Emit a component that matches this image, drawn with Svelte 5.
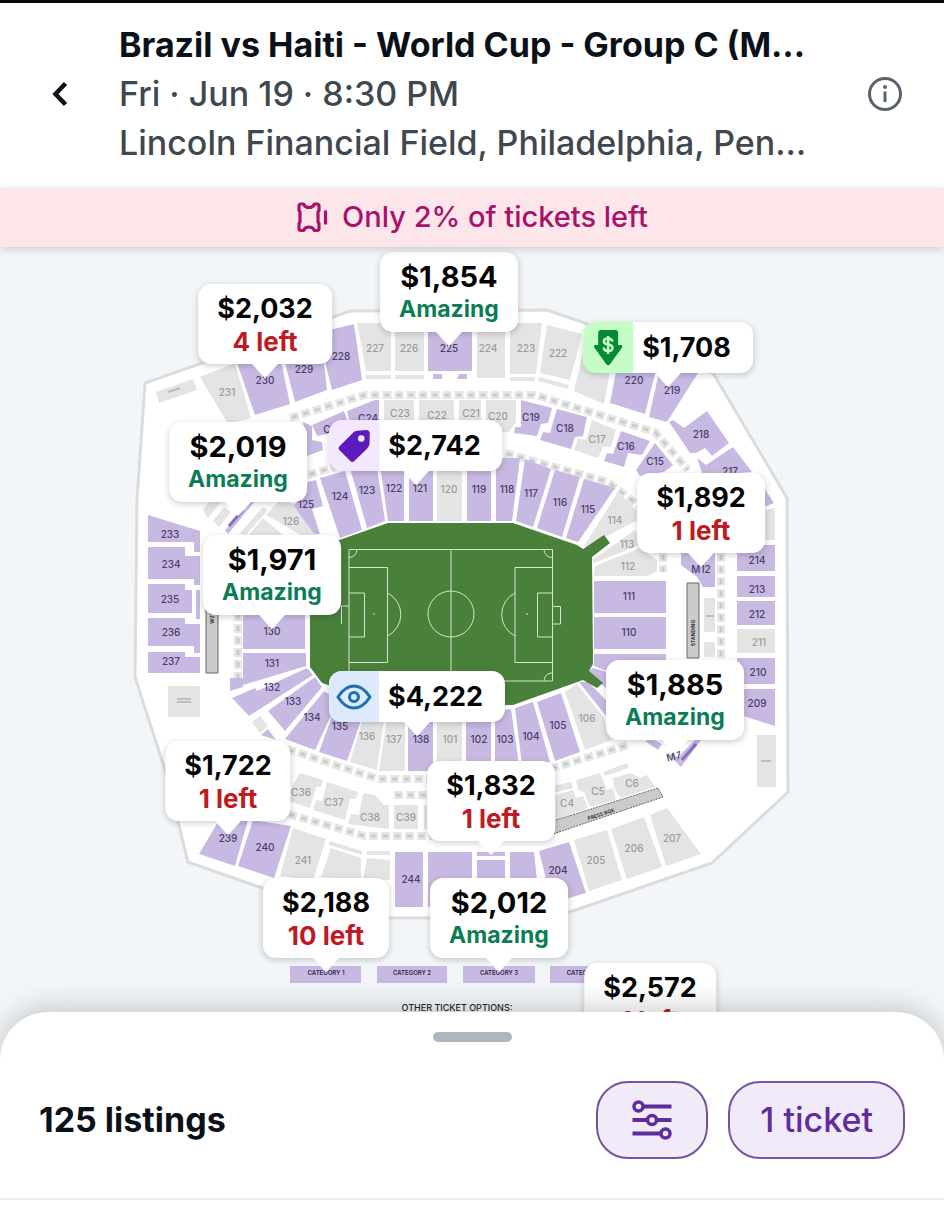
<script>
  // Seating sections: [kind, polygon, label, label x, label y]; kind p = available, g = unavailable
  const sections = [
    // Upper deck, top side
    ['g', '156,392 193,379 197,390 159,403', '', 0, 0],
    ['g', '200,377 235,363 251,418 228,424', '231', 227, 393],
    ['p', '237,363 280,356 290,404 255,415', '230', 265, 381],
    ['p', '283,355 322,345 327,390 295,402', '229', 304, 370],
    ['p', '318,333 354,324 362,380 332,390', '228', 341, 357],
    ['g', '357,323 391,323 391,371 366,371', '227', 375, 349],
    ['g', '366,375 391,375 391,379 366,379', '', 0, 0],
    ['g', '395,323 424,323 424,371 395,371', '226', 409, 349],
    ['g', '395,375 424,375 424,379 395,379', '', 0, 0],
    ['p', '428,323 472,323 472,371 428,371', '225', 449, 349],
    ['p', '433,374 442,374 442,379 433,379', '', 0, 0],
    ['p', '459,374 467,374 467,379 457,379', '', 0, 0],
    ['g', '477,323 505,323 505,378 477,378', '224', 488, 349],
    ['g', '510,323 542,323 536,374 510,374', '223', 526, 349],
    ['g', '510,377 535,377 535,381 510,381', '', 0, 0],
    ['g', '547,325 582,334 570,380 540,373', '222', 558, 354],
    ['g', '539,377 569,385 568,389 538,381', '', 0, 0],
    ['g', '586,340 614,350 604,404 574,391', '', 0, 0],
    ['p', '618,362 657,366 645,414 610,403', '220', 634, 381],
    ['p', '660,368 698,373 667,422 649,417', '219', 672, 391],
    // Upper deck, right side
    ['p', '707,411 729,443 712,456 705,448 696,453 690,453 669,422 673,420 684,428', '218', 701, 435],
    ['p', '697,458 706,465 733,447 752,472 703,476', '217', 730, 472],
    ['p', '762,485 774,503 762,508', '', 0, 0],
    ['g', '760,511 775,508 775,540 760,540', '', 0, 0],
    ['p', '737,545 775,545 775,571 737,571', '214', 757, 561],
    ['p', '737,576 775,576 775,597 737,597', '213', 757, 590],
    ['p', '737,601 775,601 775,625 737,625', '212', 757, 615],
    ['g', '737,629 775,629 775,653 737,653', '211', 759, 643],
    ['p', '737,658 775,658 775,684 737,684', '210', 758, 673],
    ['p', '737,689 775,689 775,726 737,714', '209', 757, 704],
    ['g', '757,735 776,735 776,787 757,787', '', 0, 0],
    // Upper deck, left side
    ['p', '148,515 200,531 200,552 194,552 194,542 148,542', '233', 170, 535],
    ['p', '148,547 185,547 185,556 200,556 200,585 194,585 194,579 148,579', '234', 171, 565],
    ['p', '148,584 185,584 185,590 192,590 192,613 148,613', '235', 170, 600],
    ['p', '196,590 200,590 200,619 196,619', '', 0, 0],
    ['p', '148,618 185,618 185,624 200,624 200,653 194,653 194,646 148,646', '236', 171, 633],
    ['p', '148,652 185,652 185,657 200,657 200,673 148,673', '237', 171, 662],
    ['g', '168,686 200,686 200,717 168,717', '', 0, 0],
    // Upper deck, bottom side
    ['p', '218,822 248,820 235,866 199,854', '239', 228, 839],
    ['p', '253,820 291,826 274,878 238,866', '240', 265, 848],
    ['g', '293,828 326,839 313,880 280,876', '241', 303, 861],
    ['g', '331,848 361,858 361,880 321,877', '', 0, 0],
    ['g', '330,841 362,851 362,855 329,845', '', 0, 0],
    ['g', '367,858 390,860 390,880 363,880', '', 0, 0],
    ['g', '367,851 390,851 390,855 367,855', '', 0, 0],
    ['p', '395,852 423,852 423,907 395,907', '244', 411, 880],
    ['p', '428,852 472,852 472,907 428,907', '', 0, 0],
    ['p', '477,852 505,852 505,856 477,856', '', 0, 0],
    ['p', '477,860 505,860 505,890 477,890', '', 0, 0],
    ['p', '510,852 534,852 538,890 510,890', '', 0, 0],
    ['p', '539,851 569,842 586,893 552,903', '204', 558, 871],
    ['g', '574,840 607,830 622,880 589,891', '205', 596, 861],
    ['g', '611,829 644,817 662,867 627,879', '206', 634, 849],
    ['g', '650,815 667,808 701,854 666,866', '207', 672, 839],
    // Club level, top
    ['p', '303,422 312,426 312,440 322,442 323,450 307,456', '', 0, 0],
    ['p', '312,425 344,411 348,422 330,428 328,434 317,436', 'C25', 333, 430],
    ['p', '347,411 375,400 379,400 379,424 350,424', 'C24', 368, 419],
    ['g', '384,400 414,400 414,424 384,424', 'C23', 400, 414],
    ['g', '419,400 454,400 454,424 419,424', 'C22', 437, 416],
    ['g', '459,400 481,400 481,424 459,424', 'C21', 471, 414],
    ['g', '486,400 516,400 516,422 509,432 486,432', 'C20', 498, 417],
    ['p', '521,400 552,408 548,423 541,424 537,436 514,433 515,427 521,427', 'C19', 531, 418],
    ['p', '557,409 587,417 583,436 575,437 571,449 540,440 543,432 550,433', 'C18', 565, 429],
    ['g', '592,420 616,430 611,447 603,447 598,458 574,450 578,438 586,440', 'C17', 597, 440],
    ['p', '621,431 650,441 642,455 628,453 624,467 604,461 607,453 613,454', 'C16', 626, 447],
    ['p', '655,443 673,465 664,472 640,476 636,470', 'C15', 655, 462],
    // Club level, bottom
    ['g', '300,773 323,780 321,787 316,787 310,808 285,800', 'C36', 301, 793],
    ['g', '327,782 358,792 356,799 350,799 345,820 313,810 316,800 322,801', 'C37', 334, 803],
    ['g', '363,793 375,795 384,805 389,805 389,829 348,824 351,814 359,815', 'C38', 370, 818],
    ['g', '394,805 418,805 418,829 394,829', 'C39', 406, 818],
    ['g', '424,805 436,805 436,829 424,829', '', 0, 0],
    ['g', '553,786 571,782 573,788 553,793', '', 0, 0],
    ['g', '553,796 573,790 576,798 583,796 588,808 553,821', 'C4', 567, 804],
    ['g', '576,780 600,773 607,790 613,788 616,800 590,807 584,792 578,790', 'C5', 598, 792],
    ['g', '603,772 627,763 629,768 605,776', '', 0, 0],
    ['g', '613,778 631,773 640,778 647,775 655,787 620,798 614,787', 'C6', 632, 784],
    // Lower bowl, top
    ['g', '203,510 212,498 222,500 208,518', '', 0, 0],
    ['g', '213,521 224,507 231,512 219,527', '', 0, 0],
    ['p', '225,530 250,502 256,500 228,534', '', 0, 0],
    ['g', '240,533 263,507 268,510 245,536', '', 0, 0],
    ['g', '263,518 284,536 248,536', '', 0, 0],
    ['g', '266,515 280,500 294,504 316,538 303,536', '126', 291, 522],
    ['p', '294,506 308,482 316,480 323,506 312,509 320,534 314,534', '125', 306, 505],
    ['p', '320,478 345,471 362,530 340,538', '124', 340, 497],
    ['p', '350,468 377,468 385,521 367,528', '123', 367, 491],
    ['p', '380,465 404,465 404,521 388,521', '122', 394, 489],
    ['p', '409,465 433,465 433,521 409,521', '121', 420, 489],
    ['g', '437,465 462,465 462,521 437,521', '120', 449, 490],
    ['p', '467,465 491,458 491,521 467,521', '119', 479, 490],
    ['p', '496,458 520,458 512,521 496,521', '118', 507, 490],
    ['p', '525,459 551,469 533,527 516,521', '117', 531, 494],
    ['p', '555,470 580,477 562,537 537,528', '116', 560, 503],
    ['p', '584,479 615,488 578,542 566,538', '115', 588, 510],
    ['g', '618,492 638,512 638,520 605,537 598,545 584,546', '114', 615, 521],
    ['g', '592,560 635,530 645,543 594,563', '113', 627, 545],
    ['g', '595,566 640,548 657,560 657,571 648,576 594,576', '112', 628, 567],
    // Lower bowl, ends
    ['p', '594,581 666,581 666,613 594,613', '111', 629, 597],
    ['p', '594,617 666,617 666,649 594,649', '110', 629, 633],
    ['p', '594,654 666,654 666,670 604,670 594,666', '', 0, 0],
    ['p', '593,668 608,672 608,690 588,672', '', 0, 0],
    ['p', '579,682 588,682 606,700 606,716', '', 0, 0],
    ['p', '681,553 715,553 715,587 703,587 697,577 681,565', 'M12', 701, 570],
    ['g', '704,598 715,598 715,632 704,632', '', 0, 0],
    ['g', '704,642 715,642 715,657 704,657', '', 0, 0],
    ['p', '243,610 305,610 305,649 243,649', '130', 272, 632],
    ['p', '243,653 306,653 306,666 243,685 243,687 230,691 230,678 243,678', '131', 272, 664],
    ['p', '232,698 255,688 257,691 307,668 313,675 249,716', '132', 272, 688],
    // Lower bowl, bottom
    ['p', '268,711 315,677 322,687 285,731', '133', 293, 702],
    ['p', '285,739 324,691 333,697 331,716 315,750', '134', 312, 718],
    ['p', '335,708 364,712 347,761 319,752', '135', 340, 727],
    ['g', '252,722 260,716 268,726 260,733', '', 0, 0],
    ['p', '261,735 268,729 276,740', '', 0, 0],
    ['g', '365,712 385,712 377,770 350,762', '136', 367, 737],
    ['g', '388,712 405,712 405,771 379,771', '137', 394, 740],
    ['p', '408,712 433,712 433,771 408,771', '138', 421, 740],
    ['g', '437,712 462,712 462,765 437,765', '101', 450, 740],
    ['p', '466,712 491,712 491,765 466,765', '102', 479, 740],
    ['p', '495,711 511,709 519,765 495,765', '103', 505, 740],
    ['p', '515,708 533,702 550,762 522,765', '104', 531, 737],
    ['p', '537,702 561,693 580,752 555,761', '105', 558, 726],
    ['g', '565,692 577,684 604,718 612,740 585,750', '106', 587, 719],
    ['p', '645,741 652,739 662,744 658,750', '', 0, 0],
    ['p', '667,753 678,757 697,738 701,740 681,767', '', 0, 0],
    // General categories
    ['p', '290,966 361,966 361,983 290,983', '', 0, 0],
    ['p', '377,966 447,966 447,983 377,983', '', 0, 0],
    ['p', '463,966 535,966 535,983 463,983', '', 0, 0],
    ['p', '550,966 620,966 620,983 550,983', '', 0, 0],
  ];

  // Rows of suites, drawn as dashed strokes
  const suites = [
    '290,418 365,395 535,395 655,432 688,470',
    '308,475 335,467',
    '505,453 608,482 642,508',
    '287,749 378,779 432,779',
    '394,795 430,795',
    '550,769 628,745',
    '288,814 365,836 432,836',
    '238,612 238,678',
    '721,553 721,658',
    '663,553 663,572',
  ];

  const categories = [
    ['CATEGORY 1', 326],
    ['CATEGORY 2', 412],
    ['CATEGORY 3', 499],
    ['CATEGORY 4', 586],
  ];

  // Price pins: x and y are the point of the pin on the map
  const pins = [
    { x: 449, y: 346, price: '$1,854', note: 'Amazing', tone: 'good' },
    { x: 265, y: 378, price: '$2,032', note: '4 left', tone: 'low' },
    { x: 668, y: 387, price: '$1,708', icon: 'deal' },
    { x: 238, y: 516, price: '$2,019', note: 'Amazing', tone: 'good' },
    { x: 416, y: 485, price: '$2,742', icon: 'tag' },
    { x: 701, y: 567, price: '$1,892', note: '1 left', tone: 'low' },
    { x: 272, y: 629, price: '$1,971', note: 'Amazing', tone: 'good' },
    { x: 675, y: 754, price: '$1,885', note: 'Amazing', tone: 'good' },
    { x: 417, y: 736, price: '$4,222', icon: 'eye' },
    { x: 228, y: 835, price: '$1,722', note: '1 left', tone: 'low' },
    { x: 491, y: 855, price: '$1,832', note: '1 left', tone: 'low' },
    { x: 326, y: 972, price: '$2,188', note: '10 left', tone: 'low' },
    { x: 499, y: 972, price: '$2,012', note: 'Amazing', tone: 'good' },
    { x: 650, y: 1057, price: '$2,572', note: '1 left', tone: 'low' },
  ];

  const top = 247;
  const mapWidth = 944;
  const mapHeight = 824;
</script>

<div class="page">
  <header>
    <button class="icon-button" aria-label="Back">
      <svg width="20" height="28" viewBox="0 0 20 28"><path d="M15.500 3.500 5.500 14 15.500 24.500" fill="none" stroke="#0b1118" stroke-width="4.500" /></svg>
    </button>
    <div class="event">
      <h1>Brazil vs Haiti - World Cup - Group C (M…</h1>
      <p>Fri · Jun 19 · 8:30 PM</p>
      <p>Lincoln Financial Field, Philadelphia, Pen…</p>
    </div>
    <button class="icon-button" aria-label="Event information">
      <svg width="36" height="36" viewBox="0 0 36 36"><circle cx="18" cy="18" r="15.500" fill="none" stroke="#59626c" stroke-width="3" /><circle cx="18" cy="11" r="2" fill="#59626c" /><path d="M18 15.500V26" stroke="#59626c" stroke-width="3" /></svg>
    </button>
  </header>

  <div class="banner">
    <svg width="32" height="34" viewBox="0 0 32 34" fill="none" stroke="#a8126c" stroke-width="3.200">
      <path d="M3 6Q3 4 5 4H7.500Q9 7.500 13 7.500T18.500 4H21Q23 4 23 6V10.500L22 12V22L23 23.500V28.500Q23 30.500 21 30.500H18.500Q17 27 13 27T7.500 30.500H5Q3 30.500 3 28.500V23.500L4 22V12L3 10.500Z" stroke-linejoin="round" />
      <path d="M29.500 10.500V24.500" />
    </svg>
    <span>Only 2% of tickets left</span>
  </div>

  <main class="map">
    <svg class="venue" viewBox="0 {top} {mapWidth} {mapHeight}">
      <polygon class="shell" points="350,311 547,310 582,322 713,373 787,498 788,792 712,863 570,912 540,918 390,918 262,888 188,862 165,770 135,677 137,500 145,383" />
      {#each suites as points}
        <polyline class="suite" {points} />
        <polyline class="suite-mark" {points} />
      {/each}
      {#each sections as [kind, points]}
        <polygon class={kind} {points} />
      {/each}

      <g class="bar">
        <path d="M206 600H218V673H206Z M687 583H699V658H687Z" />
        <path d="M553 821 658 788 663 797 553 834Z" stroke-dasharray="2 1" />
      </g>
      <g class="tiny">
        <text x="601" y="816" transform="rotate(-18 601 814)">PRESS BOX</text>
        <text x="693" y="635" transform="rotate(-90 693 633)">STANDING</text>
        <text x="212" y="620" transform="rotate(-90 212 618)">W27</text>
      </g>
      <path class="blur-lines" d="M168 392 180 388M177 699H191M177 702H191M761 761H771M706 616H714" />
      <path class="blur-dark" d="M229 526 243 510M682 760 696 744" />
      <text class="label p-label" x="674" y="760" transform="rotate(-15 674 757)">M7</text>

      <polygon class="grass" points="388,523 513,523 577,545 583,549 604,535 610,543 592,557 593,664 589,671 603,683 597,688 583,680 513,705 388,705 322,683 310,667 310,560 322,546" />
      <g class="lines">
        <path d="M349 549.500H552.500V681H349ZM451 549.500V681M349 567.500H387.500V662.500H349M349 593H364.500V637H349M349 606H341.500V624M552 567.500H515V662.500H552M552 593H537.500V637H552M552 606.500H560.500V624H552" />
        <circle cx="451" cy="614" r="23" />
        <path d="M387.500 593A24 24 0 0 1 387.500 636M515 593A24 24 0 0 0 515 636M357 549.500A8 8 0 0 1 349 557.500M544 549.500A8 8 0 0 0 552 557.500M544 681A8 8 0 0 1 552 673M373 614H375M526 614H528" />
      </g>

      {#each sections as [kind, , label, x, y]}
        {#if label}<text class="label {kind}-label" {x} y={y + 3}>{label}</text>{/if}
      {/each}
      {#each categories as [label, x]}
        <text class="category" {x} y="975">{label}</text>
      {/each}
      <text class="other" x="457" y="1011">OTHER TICKET OPTIONS:</text>
    </svg>

    {#each pins as pin}
      <button
        class="pin"
        style="left: {(pin.x / mapWidth) * 100}%; top: {((pin.y - top) / mapHeight) * 100}%"
      >
        {#if pin.icon}
          <span class="badge {pin.icon}">
            {#if pin.icon === 'deal'}
              <svg width="30" height="38" viewBox="0 0 30 38">
                <path d="M8 1H22Q25 1 25 4V16H28Q30 17 28.500 19L17 35Q15 37.500 13 35L1.500 19Q0 17 2 16H5V4Q5 1 8 1Z" fill="#09883a" />
                <path d="M19.500 12.500Q18.500 9.500 15 9.500C9 9.500 9.500 15 15 15.500C21 16 20.500 22 15 22Q11 22 10.500 18.500M15 7V25" fill="none" stroke="#c4fdc6" stroke-width="2.500" />
              </svg>
            {:else if pin.icon === 'tag'}
              <svg width="34" height="34" viewBox="0 0 34 34">
                <path d="M2 17.500 16 3.500Q17.500 2 20 1.800L29 1Q32.500 1 32.500 4.500L32.200 15Q32 17.500 30 19.500L17 32Q15 34 13 32L2 21Q.500 19 2 17.500Z" fill="#5d1bbd" />
                <circle cx="24" cy="9.500" r="3.200" fill="#f4e8fe" />
              </svg>
            {:else}
              <svg width="36" height="26" viewBox="0 0 36 26" fill="none" stroke="#1c6fb0" stroke-width="3">
                <path d="M2 13Q9 2 18 2T34 13Q27 24 18 24T2 13Z" stroke-linejoin="round" />
                <circle cx="18" cy="13" r="4.500" />
              </svg>
            {/if}
          </span>
          <span class="price single">{pin.price}</span>
        {:else}
          <span class="body {pin.tone}">
            <span class="price">{pin.price}</span>
            <span class="note">{pin.note}</span>
          </span>
        {/if}
      </button>
    {/each}
  </main>

  <section class="sheet">
    <div class="handle"></div>
    <div class="toolbar">
      <h2>125 listings</h2>
      <button class="pill filter" aria-label="Filters">
        <svg width="40" height="40" viewBox="0 0 40 40" fill="none" stroke="#5f2d9c" stroke-width="4">
          <path d="M12 6.500H39.500M.500 20H15M25 20H39.500M.500 33.500H28" />
          <circle cx="6.500" cy="6.500" r="4.500" stroke-width="3.500" />
          <circle cx="20" cy="20" r="4.500" stroke-width="3.500" />
          <circle cx="33.500" cy="33.500" r="4.500" stroke-width="3.500" />
        </svg>
      </button>
      <button class="pill">1 ticket</button>
    </div>
  </section>
</div>

<style>
  :global(body) {
    margin: 0;
    background: #fff;
  }

  .page {
    font-family: Inter, "Liberation Sans", sans-serif;
    color: #0b1118;
    overflow: hidden;
  }

  button {
    font: inherit;
    color: inherit;
    border: 0;
    padding: 0;
    background: none;
    cursor: pointer;
  }

  header {
    display: flex;
    align-items: center;
    padding: 17px 0 21px;
    border-top: 3px solid #08080c;
  }

  .icon-button {
    flex: none;
    width: 119px;
    height: 56px;
    display: grid;
    place-items: center;
  }

  .event {
    flex: 1;
    min-width: 0;
  }

  .event h1,
  .event p {
    margin: 0;
    font-size: 34px;
    line-height: 49px;
    font-weight: 500;
    white-space: nowrap;
    overflow: hidden;
    text-overflow: ellipsis;
    color: #3f474f;
  }

  .event h1 {
    font-weight: 700;
    color: #0b1118;
  }

  .banner {
    position: relative;
    z-index: 2;
    display: flex;
    align-items: center;
    justify-content: center;
    gap: 14px;
    height: 57px;
    padding-bottom: 2px;
    background: #fde6ea;
    color: #a8126c;
    font-size: 29px;
    font-weight: 500;
    box-shadow: 0 2px 8px rgba(20, 40, 40, 0.2);
  }

  .map {
    position: relative;
    background: #f3f6f8;
  }

  .venue {
    display: block;
    width: 100%;
  }

  .shell {
    fill: #fff;
    stroke: #dcdcde;
    stroke-width: 3;
  }

  .p {
    fill: #c8b9e3;
  }

  .g {
    fill: #e4e4e4;
  }

  .suite,
  .suite-mark {
    fill: none;
    stroke: #e6e6e6;
    stroke-width: 8;
    stroke-dasharray: 9 3;
  }

  .suite-mark {
    stroke: #cbcbcb;
    stroke-width: 3;
    stroke-dasharray: 5 7;
    stroke-dashoffset: -2;
  }

  .bar {
    fill: #cbcbcb;
    stroke: #666;
  }

  .blur-lines {
    stroke: #bcbcbc;
    stroke-width: 2;
  }

  .blur-dark {
    stroke: #8a6fba;
    stroke-width: 3;
  }

  .grass {
    fill: #4a813a;
  }

  .lines {
    fill: none;
    stroke: #d5e3d0;
    stroke-width: 1;
  }

  .venue text {
    text-anchor: middle;
  }

  .label {
    font-size: 10px;
    font-weight: 500;
  }

  .p-label {
    fill: #4b3d69;
  }

  .g-label {
    fill: #9b9b9b;
  }

  .tiny {
    font-size: 5px;
    font-weight: 700;
    fill: #333;
  }

  .category {
    font-size: 6px;
    font-weight: 600;
    fill: #2d2540;
  }

  .other {
    font-size: 9px;
    font-weight: 500;
    fill: #222;
  }

  .pin {
    position: absolute;
    display: flex;
    transform: translate(-50%, -100%);
    margin-top: -14px;
    background: #fff;
    border-radius: 13px;
    box-shadow: 0 2px 6px rgba(30, 30, 50, 0.22);
    color: #050505;
    white-space: nowrap;
  }

  .pin::after {
    content: "";
    position: absolute;
    top: 100%;
    left: 50%;
    width: 26px;
    height: 14px;
    transform: translateX(-50%);
    background: #fff;
    clip-path: polygon(0 0, 100% 0, 58% 86%, 50% 100%, 42% 86%);
  }

  .body {
    display: flex;
    flex-direction: column;
    align-items: center;
    padding: 8px 19px 6px;
  }

  .price {
    font-size: 27px;
    line-height: 33px;
    font-weight: 700;
  }

  .single {
    padding: 9px 22px 9px 9px;
  }

  .note {
    font-size: 26px;
    line-height: 33px;
    font-weight: 700;
  }

  .good .price {
    font-size: 29px;
  }

  .good .note {
    font-size: 23px;
    color: #0b7d55;
  }

  .low .note {
    color: #bf1a22;
  }

  .badge {
    width: 50px;
    display: grid;
    place-items: center;
    border-radius: 13px 0 0 13px;
  }

  .deal {
    background: #c4fdc6;
  }

  .tag {
    background: #f4e8fe;
  }

  .eye {
    background: #dceafc;
  }

  .sheet {
    position: relative;
    z-index: 3;
    margin-top: -59px;
    background: #fff;
    border-radius: 48px 48px 0 0;
    box-shadow: 0 -4px 28px rgba(40, 45, 55, 0.24);
    padding-top: 20px;
  }

  .handle {
    width: 79px;
    height: 10px;
    margin: 0 auto;
    border-radius: 5px;
    background: #afb6c0;
  }

  .toolbar {
    display: flex;
    align-items: center;
    gap: 20px;
    padding: 39px 39px 39px;
    border-bottom: 2px solid #ececee;
  }

  h2 {
    flex: 1;
    margin: 0;
    font-size: 34px;
    line-height: 40px;
    font-weight: 700;
  }

  .pill {
    height: 78px;
    padding: 0 30px;
    border: 2px solid #74549c;
    border-radius: 32px;
    background: #f1eaf9;
    color: #5f2d9c;
    font-size: 34px;
    line-height: 40px;
    font-weight: 500;
  }

  .filter {
    display: grid;
    place-items: center;
    width: 112px;
  }
</style>
